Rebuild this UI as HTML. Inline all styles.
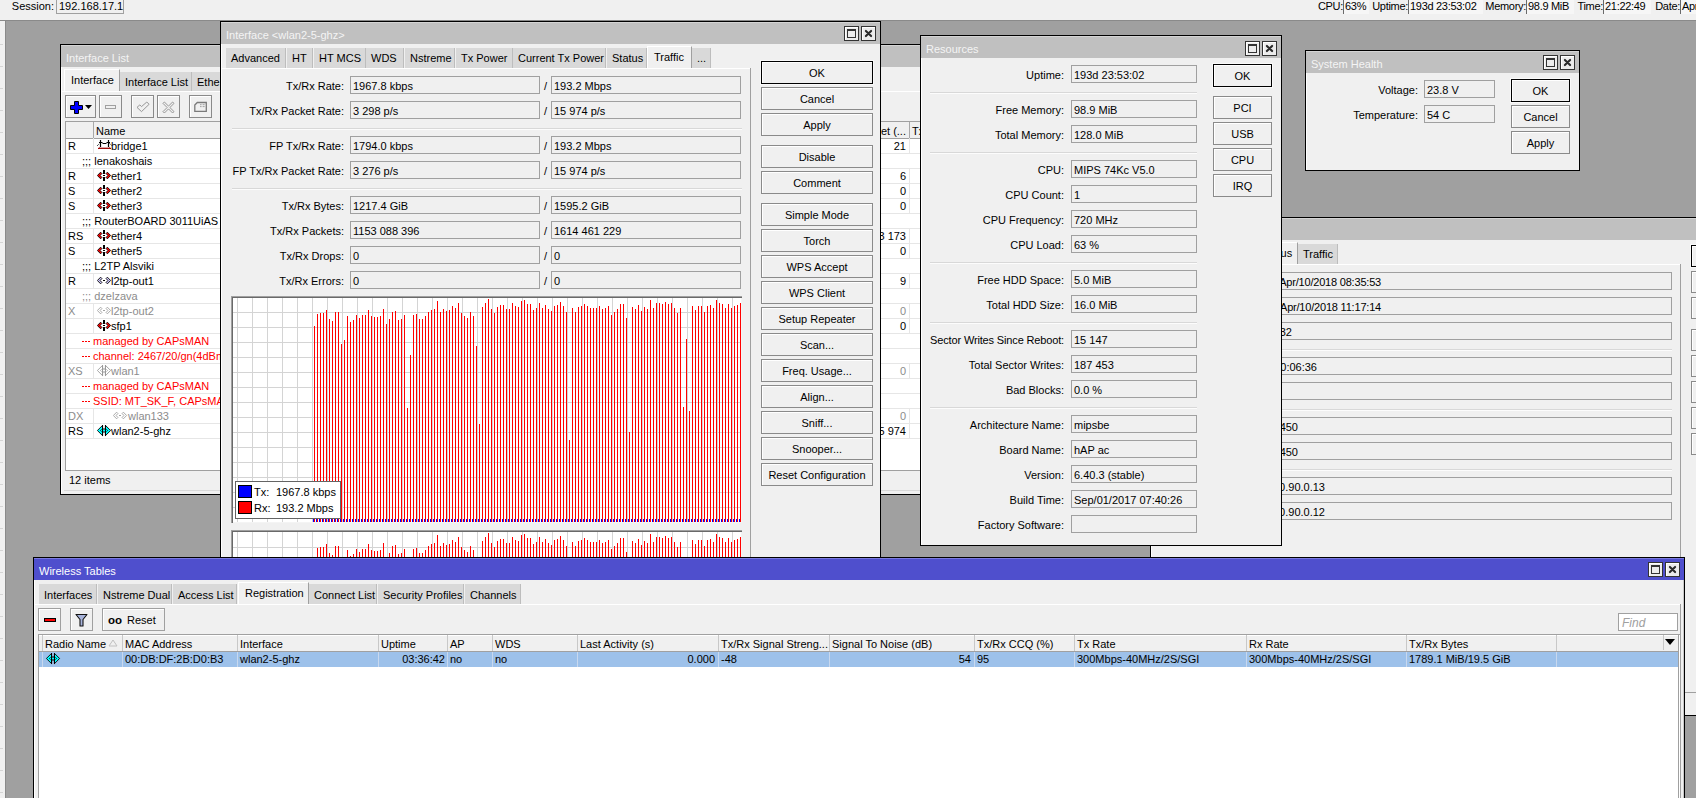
<!DOCTYPE html><html><head><meta charset="utf-8"><style>
html,body{margin:0;padding:0;}
body{width:1696px;height:798px;overflow:hidden;position:relative;background:#a0a0a0;font-family:"Liberation Sans",sans-serif;font-size:11px;color:#000;}
div,svg{position:absolute;}
.t{white-space:nowrap;line-height:13px;font-size:11px;}
</style></head><body>
<div style="left:0px;top:0px;width:1696px;height:20px;background:#f0f0f0;"></div>
<div style="left:0px;top:20px;width:1696px;height:1px;background:#8a8a8a;"></div>
<div style="left:0px;top:21px;width:5px;height:777px;background:#f0f0f0;"></div>
<div style="left:5px;top:21px;width:1px;height:777px;background:#8a8a8a;"></div>
<div style="left:0px;top:44px;width:3px;height:1px;background:#d4d4d4;"></div>
<div style="left:0px;top:66px;width:3px;height:1px;background:#d4d4d4;"></div>
<div style="left:0px;top:88px;width:3px;height:1px;background:#d4d4d4;"></div>
<div style="left:0px;top:110px;width:3px;height:1px;background:#d4d4d4;"></div>
<div style="left:0px;top:132px;width:3px;height:1px;background:#d4d4d4;"></div>
<div style="left:0px;top:154px;width:3px;height:1px;background:#d4d4d4;"></div>
<div style="left:0px;top:176px;width:3px;height:1px;background:#d4d4d4;"></div>
<div style="left:0px;top:198px;width:3px;height:1px;background:#d4d4d4;"></div>
<div style="left:0px;top:220px;width:3px;height:1px;background:#d4d4d4;"></div>
<div style="left:0px;top:242px;width:3px;height:1px;background:#d4d4d4;"></div>
<div style="left:0px;top:264px;width:3px;height:1px;background:#d4d4d4;"></div>
<div style="left:0px;top:286px;width:3px;height:1px;background:#d4d4d4;"></div>
<div style="left:0px;top:308px;width:3px;height:1px;background:#d4d4d4;"></div>
<div style="left:0px;top:330px;width:3px;height:1px;background:#d4d4d4;"></div>
<div style="left:0px;top:352px;width:3px;height:1px;background:#d4d4d4;"></div>
<div style="left:0px;top:374px;width:3px;height:1px;background:#d4d4d4;"></div>
<div style="left:0px;top:396px;width:3px;height:1px;background:#d4d4d4;"></div>
<div style="left:0px;top:418px;width:3px;height:1px;background:#d4d4d4;"></div>
<div style="left:0px;top:440px;width:3px;height:1px;background:#d4d4d4;"></div>
<div style="left:0px;top:462px;width:3px;height:1px;background:#d4d4d4;"></div>
<div style="left:0px;top:484px;width:3px;height:1px;background:#d4d4d4;"></div>
<div style="left:0px;top:506px;width:3px;height:1px;background:#d4d4d4;"></div>
<div style="left:0px;top:528px;width:3px;height:1px;background:#d4d4d4;"></div>
<div style="left:0px;top:550px;width:3px;height:1px;background:#d4d4d4;"></div>
<div style="left:0px;top:572px;width:3px;height:1px;background:#d4d4d4;"></div>
<div style="left:0px;top:594px;width:3px;height:1px;background:#d4d4d4;"></div>
<div style="left:0px;top:616px;width:3px;height:1px;background:#d4d4d4;"></div>
<div style="left:0px;top:638px;width:3px;height:1px;background:#d4d4d4;"></div>
<div style="left:0px;top:660px;width:3px;height:1px;background:#d4d4d4;"></div>
<div style="left:0px;top:682px;width:3px;height:1px;background:#d4d4d4;"></div>
<div style="left:0px;top:704px;width:3px;height:1px;background:#d4d4d4;"></div>
<div style="left:0px;top:726px;width:3px;height:1px;background:#d4d4d4;"></div>
<div style="left:0px;top:748px;width:3px;height:1px;background:#d4d4d4;"></div>
<div style="left:0px;top:770px;width:3px;height:1px;background:#d4d4d4;"></div>
<div style="left:0px;top:792px;width:3px;height:1px;background:#d4d4d4;"></div>
<div class="t" style="right:1642px;top:0px;">Session:</div>
<div style="left:56px;top:-4px;width:68px;height:18px;border:1px solid #a0a0a0;box-sizing:border-box;"></div>
<div class="t" style="left:59px;top:0px;">192.168.17.1</div>
<div class="t" style="right:353px;top:0px;letter-spacing:-0.3px;">CPU:</div>
<div style="left:1343px;top:-2px;width:25px;height:16px;background:#f6f6f6;border-left:1px solid #6a6a6a;"></div>
<div class="t" style="left:1345px;top:0px;letter-spacing:-0.3px;">63%</div>
<div class="t" style="right:288px;top:0px;letter-spacing:-0.3px;">Uptime:</div>
<div style="left:1408px;top:-2px;width:74px;height:16px;background:#f6f6f6;border-left:1px solid #6a6a6a;"></div>
<div class="t" style="left:1410px;top:0px;letter-spacing:-0.3px;">193d 23:53:02</div>
<div class="t" style="right:170px;top:0px;letter-spacing:-0.3px;">Memory:</div>
<div style="left:1526px;top:-2px;width:47px;height:16px;background:#f6f6f6;border-left:1px solid #6a6a6a;"></div>
<div class="t" style="left:1528px;top:0px;letter-spacing:-0.3px;">98.9 MiB</div>
<div class="t" style="right:93px;top:0px;letter-spacing:-0.3px;">Time:</div>
<div style="left:1603px;top:-2px;width:47px;height:16px;background:#f6f6f6;border-left:1px solid #6a6a6a;"></div>
<div class="t" style="left:1605px;top:0px;letter-spacing:-0.3px;">21:22:49</div>
<div class="t" style="right:16px;top:0px;letter-spacing:-0.3px;">Date:</div>
<div style="left:1680px;top:-2px;width:40px;height:16px;background:#f6f6f6;border-left:1px solid #6a6a6a;"></div>
<div class="t" style="left:1682px;top:0px;letter-spacing:-0.3px;">Apr/10/2018</div>
<div style="left:1150px;top:217px;width:560px;height:499px;border:1px solid #000;box-sizing:border-box;background:#f0f0f0;"></div>
<div style="left:1151px;top:218px;width:1px;height:497px;background:#fff;"></div>
<div style="left:1151px;top:218px;width:558px;height:22px;background:#c0c0c0;border-top:1px solid #d4d4d4;box-sizing:border-box;"></div>
<div style="left:1254px;top:242px;width:44px;height:23px;background:#f0f0f0;border-top:1px solid #fff;border-left:1px solid #fff;border-right:1px solid #a0a0a0;box-sizing:border-box;"></div>
<div class="t" style="left:1261px;top:247px;">Status</div>
<div style="left:1298px;top:244px;width:40px;height:20px;background:#d9d9d9;border-right:1px solid #bdbdbd;box-sizing:border-box;"></div>
<div class="t" style="left:1303px;top:248px;">Traffic</div>
<div style="left:1150px;top:264px;width:530px;height:1px;background:#fff;"></div>
<div style="left:1680px;top:264px;width:1px;height:430px;background:#a0a0a0;"></div>
<div style="left:1180px;top:272px;width:492px;height:18px;border:1px solid #a0a0a0;box-sizing:border-box;background:#f0f0f0;"></div>
<div class="t" style="right:315px;top:276px;letter-spacing:-0.2px;">Apr/10/2018 08:35:53</div>
<div style="left:1180px;top:297px;width:492px;height:18px;border:1px solid #a0a0a0;box-sizing:border-box;background:#f0f0f0;"></div>
<div class="t" style="right:315px;top:301px;letter-spacing:-0.2px;">Apr/10/2018 11:17:14</div>
<div style="left:1180px;top:322px;width:492px;height:18px;border:1px solid #a0a0a0;box-sizing:border-box;background:#f0f0f0;"></div>
<div class="t" style="right:404px;top:326px;">1032</div>
<div style="left:1180px;top:357px;width:492px;height:18px;border:1px solid #a0a0a0;box-sizing:border-box;background:#f0f0f0;"></div>
<div class="t" style="right:379px;top:361px;">00:06:36</div>
<div style="left:1180px;top:382px;width:492px;height:18px;border:1px solid #a0a0a0;box-sizing:border-box;background:#f0f0f0;"></div>
<div style="left:1180px;top:417px;width:492px;height:18px;border:1px solid #a0a0a0;box-sizing:border-box;background:#f0f0f0;"></div>
<div class="t" style="right:398px;top:421px;">5450</div>
<div style="left:1180px;top:442px;width:492px;height:18px;border:1px solid #a0a0a0;box-sizing:border-box;background:#f0f0f0;"></div>
<div class="t" style="right:398px;top:446px;">5450</div>
<div style="left:1180px;top:477px;width:492px;height:18px;border:1px solid #a0a0a0;box-sizing:border-box;background:#f0f0f0;"></div>
<div class="t" style="right:371px;top:481px;">10.90.0.13</div>
<div style="left:1180px;top:502px;width:492px;height:18px;border:1px solid #a0a0a0;box-sizing:border-box;background:#f0f0f0;"></div>
<div class="t" style="right:371px;top:506px;">10.90.0.12</div>
<div style="left:1190px;top:349px;width:482px;height:1px;background:#d8d8d8;"></div>
<div style="left:1190px;top:350px;width:482px;height:1px;background:#fcfcfc;"></div>
<div style="left:1190px;top:409px;width:482px;height:1px;background:#d8d8d8;"></div>
<div style="left:1190px;top:410px;width:482px;height:1px;background:#fcfcfc;"></div>
<div style="left:1190px;top:469px;width:482px;height:1px;background:#d8d8d8;"></div>
<div style="left:1190px;top:470px;width:482px;height:1px;background:#fcfcfc;"></div>
<div style="left:1691px;top:245px;width:60px;height:22px;border:1px solid #000;box-shadow:inset 1px 1px 0 #fff, 0 0 0 1px #fafafa;box-sizing:border-box;background:#f0f0f0;"></div>
<div style="left:1691px;top:271px;width:60px;height:22px;border:1px solid #8a8a8a;box-shadow:inset 1px 1px 0 #fff;box-sizing:border-box;background:#f0f0f0;"></div>
<div style="left:1691px;top:297px;width:60px;height:22px;border:1px solid #8a8a8a;box-shadow:inset 1px 1px 0 #fff;box-sizing:border-box;background:#f0f0f0;"></div>
<div style="left:1691px;top:329px;width:60px;height:22px;border:1px solid #8a8a8a;box-shadow:inset 1px 1px 0 #fff;box-sizing:border-box;background:#f0f0f0;"></div>
<div style="left:1691px;top:355px;width:60px;height:22px;border:1px solid #8a8a8a;box-shadow:inset 1px 1px 0 #fff;box-sizing:border-box;background:#f0f0f0;"></div>
<div style="left:1691px;top:381px;width:60px;height:22px;border:1px solid #8a8a8a;box-shadow:inset 1px 1px 0 #fff;box-sizing:border-box;background:#f0f0f0;"></div>
<div style="left:1691px;top:407px;width:60px;height:22px;border:1px solid #8a8a8a;box-shadow:inset 1px 1px 0 #fff;box-sizing:border-box;background:#f0f0f0;"></div>
<div style="left:1691px;top:433px;width:60px;height:22px;border:1px solid #8a8a8a;box-shadow:inset 1px 1px 0 #fff;box-sizing:border-box;background:#f0f0f0;"></div>
<div style="left:1151px;top:692px;width:560px;height:1px;background:#a0a0a0;"></div>
<div style="left:60px;top:44px;width:960px;height:451px;border:1px solid #000;box-sizing:border-box;background:#f0f0f0;"></div>
<div style="left:61px;top:45px;width:1px;height:449px;background:#fff;"></div>
<div style="left:61px;top:45px;width:958px;height:22px;background:#c0c0c0;border-top:1px solid #d4d4d4;box-sizing:border-box;"></div>
<div class="t" style="left:66px;top:52px;color:#f4f4f4;">Interface List</div>
<div style="left:120px;top:72px;width:72px;height:19px;background:#d9d9d9;border-right:1px solid #bdbdbd;box-sizing:border-box;"></div>
<div class="t" style="left:125px;top:76px;">Interface List</div>
<div style="left:192px;top:72px;width:60px;height:19px;background:#d9d9d9;border-right:1px solid #bdbdbd;box-sizing:border-box;"></div>
<div class="t" style="left:197px;top:76px;">Ethernet</div>
<div style="left:64px;top:69px;width:56px;height:23px;background:#f0f0f0;border-top:1px solid #fff;border-left:1px solid #fff;border-right:1px solid #a0a0a0;box-sizing:border-box;"></div>
<div class="t" style="left:71px;top:74px;">Interface</div>
<div style="left:61px;top:91px;width:958px;height:1px;background:#fff;"></div>
<div style="left:65px;top:95px;width:31px;height:23px;border:1px solid #8a8a8a;box-shadow:inset 1px 1px 0 #fff;box-sizing:border-box;"></div>
<div style="left:99px;top:95px;width:23px;height:23px;border:1px solid #8a8a8a;box-shadow:inset 1px 1px 0 #fff;box-sizing:border-box;"></div>
<div style="left:131px;top:95px;width:23px;height:23px;border:1px solid #8a8a8a;box-shadow:inset 1px 1px 0 #fff;box-sizing:border-box;"></div>
<div style="left:157px;top:95px;width:23px;height:23px;border:1px solid #8a8a8a;box-shadow:inset 1px 1px 0 #fff;box-sizing:border-box;"></div>
<div style="left:189px;top:95px;width:23px;height:23px;border:1px solid #8a8a8a;box-shadow:inset 1px 1px 0 #fff;box-sizing:border-box;"></div>
<svg style="left:65px;top:95px" width="31" height="23"><path d="M9.5 6.5H13.5V10.5H17.5V14.5H13.5V18.5H9.5V14.5H5.5V10.5H9.5Z" fill="#0000ff" stroke="#000" stroke-width="1"/><path d="M20 10H27L23.5 14Z" fill="#000"/></svg>
<svg style="left:99px;top:95px" width="23" height="23"><rect x="6.5" y="10.5" width="10" height="3" fill="none" stroke="#a0a0a0"/></svg>
<svg style="left:131px;top:95px" width="23" height="23"><path d="M6 12.4L8.8 9.9L10.5 11.6L15.8 7L18.1 9.3L10.5 16.6Z" fill="none" stroke="#8c8c8c" stroke-width="0.9"/></svg>
<svg style="left:157px;top:95px" width="23" height="23"><path d="M6 8.4L7.4 7L11.5 11.1L15.6 7L17 8.4L12.9 12.5L17 16.6L15.6 18L11.5 13.9L7.4 18L6 16.6L10.1 12.5Z" fill="none" stroke="#8c8c8c" stroke-width="0.9"/></svg>
<svg style="left:189px;top:95px" width="23" height="23"><path d="M5.8 10L8.3 7.5H17.3V16.3H5.8Z" fill="none" stroke="#7a7a7a" stroke-width="1.3"/><path d="M11 9.7H12.6M13.6 9.7H15.6M11 11.6H12.6M13.6 11.6H15.6" stroke="#999" stroke-width="0.9"/></svg>
<div style="left:65px;top:121px;width:950px;height:349px;background:#fff;border-left:1px solid #a0a0a0;border-top:1px solid #a0a0a0;box-sizing:border-box;"></div>
<div style="left:66px;top:122px;width:950px;height:17px;background:#f0f0f0;border-bottom:1px solid #a0a0a0;box-sizing:border-box;"></div>
<div style="left:93px;top:122px;width:1px;height:16px;background:#a8a8a8;"></div>
<div class="t" style="left:96px;top:125px;">Name</div>
<div style="left:909px;top:122px;width:1px;height:16px;background:#a8a8a8;"></div>
<div class="t" style="right:790px;top:125px;">Packet (...</div>
<div class="t" style="left:912px;top:125px;">Tx</div>
<div style="left:66px;top:153px;width:950px;height:1px;background:#e6e6e6;"></div>
<div style="left:93px;top:138px;width:1px;height:15px;background:#e6e6e6;"></div>
<div class="t" style="left:68px;top:140px;">R</div>
<svg style="left:97px;top:139px" width="15" height="13"><path d="M3.5 1V8M11.5 1V8" stroke="#000" stroke-width="1.2"/><path d="M2 3.5H5.5M9.5 3.5H13M5.5 4.5H9.5" stroke="#000" stroke-width="1.1"/><path d="M0.3 6.7L2.5 4.5M12.5 4.5L15 6.7" stroke="#000" stroke-width="1" stroke-dasharray="1 0.6"/><path d="M1.5 9.3H13.5" stroke="#9b0000" stroke-width="1.3"/><path d="M1 10L2.5 8.6M14 10L12.5 8.6" stroke="#9b0000" stroke-width="1"/></svg>
<div class="t" style="left:111px;top:140px;">bridge1</div>
<div class="t" style="right:790px;top:140px;">21</div>
<div style="left:909px;top:138px;width:1px;height:15px;background:#e6e6e6;"></div>
<div style="left:66px;top:168px;width:950px;height:1px;background:#e6e6e6;"></div>
<div class="t" style="left:82px;top:155px;color:#000;">;;; lenakoshais</div>
<div style="left:66px;top:183px;width:950px;height:1px;background:#e6e6e6;"></div>
<div style="left:93px;top:168px;width:1px;height:15px;background:#e6e6e6;"></div>
<div class="t" style="left:68px;top:170px;">R</div>
<svg style="left:97px;top:169px" width="15" height="13"><path d="M0.4 6.5L3.6 3.2L4.9 4.5L3.1 6.5L4.9 8.5L3.6 9.8Z" fill="#f00" stroke="#000" stroke-width="0.9"/><path d="M13.6 6.5L10.4 3.2L9.1 4.5L10.9 6.5L9.1 8.5L10.4 9.8Z" fill="#f00" stroke="#000" stroke-width="0.9"/><rect x="6" y="1" width="2" height="4" fill="#000"/><rect x="6" y="6" width="2" height="1" fill="#000"/><rect x="6" y="8" width="2" height="4" fill="#000"/></svg>
<div class="t" style="left:111px;top:170px;">ether1</div>
<div class="t" style="right:790px;top:170px;">6</div>
<div style="left:909px;top:168px;width:1px;height:15px;background:#e6e6e6;"></div>
<div style="left:66px;top:198px;width:950px;height:1px;background:#e6e6e6;"></div>
<div style="left:93px;top:183px;width:1px;height:15px;background:#e6e6e6;"></div>
<div class="t" style="left:68px;top:185px;">S</div>
<svg style="left:97px;top:184px" width="15" height="13"><path d="M0.4 6.5L3.6 3.2L4.9 4.5L3.1 6.5L4.9 8.5L3.6 9.8Z" fill="#f00" stroke="#000" stroke-width="0.9"/><path d="M13.6 6.5L10.4 3.2L9.1 4.5L10.9 6.5L9.1 8.5L10.4 9.8Z" fill="#f00" stroke="#000" stroke-width="0.9"/><rect x="6" y="1" width="2" height="4" fill="#000"/><rect x="6" y="6" width="2" height="1" fill="#000"/><rect x="6" y="8" width="2" height="4" fill="#000"/></svg>
<div class="t" style="left:111px;top:185px;">ether2</div>
<div class="t" style="right:790px;top:185px;">0</div>
<div style="left:909px;top:183px;width:1px;height:15px;background:#e6e6e6;"></div>
<div style="left:66px;top:213px;width:950px;height:1px;background:#e6e6e6;"></div>
<div style="left:93px;top:198px;width:1px;height:15px;background:#e6e6e6;"></div>
<div class="t" style="left:68px;top:200px;">S</div>
<svg style="left:97px;top:199px" width="15" height="13"><path d="M0.4 6.5L3.6 3.2L4.9 4.5L3.1 6.5L4.9 8.5L3.6 9.8Z" fill="#f00" stroke="#000" stroke-width="0.9"/><path d="M13.6 6.5L10.4 3.2L9.1 4.5L10.9 6.5L9.1 8.5L10.4 9.8Z" fill="#f00" stroke="#000" stroke-width="0.9"/><rect x="6" y="1" width="2" height="4" fill="#000"/><rect x="6" y="6" width="2" height="1" fill="#000"/><rect x="6" y="8" width="2" height="4" fill="#000"/></svg>
<div class="t" style="left:111px;top:200px;">ether3</div>
<div class="t" style="right:790px;top:200px;">0</div>
<div style="left:909px;top:198px;width:1px;height:15px;background:#e6e6e6;"></div>
<div style="left:66px;top:228px;width:950px;height:1px;background:#e6e6e6;"></div>
<div class="t" style="left:82px;top:215px;color:#000;">;;; RouterBOARD 3011UiAS</div>
<div style="left:66px;top:243px;width:950px;height:1px;background:#e6e6e6;"></div>
<div style="left:93px;top:228px;width:1px;height:15px;background:#e6e6e6;"></div>
<div class="t" style="left:68px;top:230px;">RS</div>
<svg style="left:97px;top:229px" width="15" height="13"><path d="M0.4 6.5L3.6 3.2L4.9 4.5L3.1 6.5L4.9 8.5L3.6 9.8Z" fill="#f00" stroke="#000" stroke-width="0.9"/><path d="M13.6 6.5L10.4 3.2L9.1 4.5L10.9 6.5L9.1 8.5L10.4 9.8Z" fill="#f00" stroke="#000" stroke-width="0.9"/><rect x="6" y="1" width="2" height="4" fill="#000"/><rect x="6" y="6" width="2" height="1" fill="#000"/><rect x="6" y="8" width="2" height="4" fill="#000"/></svg>
<div class="t" style="left:111px;top:230px;">ether4</div>
<div class="t" style="right:790px;top:230px;">83 173</div>
<div style="left:909px;top:228px;width:1px;height:15px;background:#e6e6e6;"></div>
<div style="left:66px;top:258px;width:950px;height:1px;background:#e6e6e6;"></div>
<div style="left:93px;top:243px;width:1px;height:15px;background:#e6e6e6;"></div>
<div class="t" style="left:68px;top:245px;">S</div>
<svg style="left:97px;top:244px" width="15" height="13"><path d="M0.4 6.5L3.6 3.2L4.9 4.5L3.1 6.5L4.9 8.5L3.6 9.8Z" fill="#f00" stroke="#000" stroke-width="0.9"/><path d="M13.6 6.5L10.4 3.2L9.1 4.5L10.9 6.5L9.1 8.5L10.4 9.8Z" fill="#f00" stroke="#000" stroke-width="0.9"/><rect x="6" y="1" width="2" height="4" fill="#000"/><rect x="6" y="6" width="2" height="1" fill="#000"/><rect x="6" y="8" width="2" height="4" fill="#000"/></svg>
<div class="t" style="left:111px;top:245px;">ether5</div>
<div class="t" style="right:790px;top:245px;">0</div>
<div style="left:909px;top:243px;width:1px;height:15px;background:#e6e6e6;"></div>
<div style="left:66px;top:273px;width:950px;height:1px;background:#e6e6e6;"></div>
<div class="t" style="left:82px;top:260px;color:#000;">;;; L2TP Alsviki</div>
<div style="left:66px;top:288px;width:950px;height:1px;background:#e6e6e6;"></div>
<div style="left:93px;top:273px;width:1px;height:15px;background:#e6e6e6;"></div>
<div class="t" style="left:68px;top:275px;">R</div>
<svg style="left:97px;top:274px" width="15" height="13"><path d="M0.4 6.5L3.6 3.2L4.9 4.5L3.1 6.5L4.9 8.5L3.6 9.8Z" fill="#d0c8ff" stroke="#000" stroke-width="0.9"/><path d="M13.6 6.5L10.4 3.2L9.1 4.5L10.9 6.5L9.1 8.5L10.4 9.8Z" fill="#d0c8ff" stroke="#000" stroke-width="0.9"/><rect x="6" y="6" width="2" height="1" fill="#000"/></svg>
<div class="t" style="left:111px;top:275px;">l2tp-out1</div>
<div class="t" style="right:790px;top:275px;">9</div>
<div style="left:909px;top:273px;width:1px;height:15px;background:#e6e6e6;"></div>
<div style="left:66px;top:303px;width:950px;height:1px;background:#e6e6e6;"></div>
<div class="t" style="left:82px;top:290px;color:#8c8c8c;">;;; dzelzava</div>
<div style="left:66px;top:318px;width:950px;height:1px;background:#e6e6e6;"></div>
<div style="left:93px;top:303px;width:1px;height:15px;background:#e6e6e6;"></div>
<div class="t" style="left:68px;top:305px;color:#8c8c8c;">X</div>
<svg style="left:97px;top:304px" width="15" height="13"><path d="M0.4 6.5L3.6 3.2L4.9 4.5L3.1 6.5L4.9 8.5L3.6 9.8Z" fill="#fff" stroke="#a0a0a0" stroke-width="0.9"/><path d="M13.6 6.5L10.4 3.2L9.1 4.5L10.9 6.5L9.1 8.5L10.4 9.8Z" fill="#fff" stroke="#a0a0a0" stroke-width="0.9"/><rect x="6" y="6" width="2" height="1" fill="#a0a0a0"/></svg>
<div class="t" style="left:111px;top:305px;color:#8c8c8c;">l2tp-out2</div>
<div class="t" style="right:790px;top:305px;color:#8c8c8c;">0</div>
<div style="left:909px;top:303px;width:1px;height:15px;background:#e6e6e6;"></div>
<div style="left:66px;top:333px;width:950px;height:1px;background:#e6e6e6;"></div>
<div style="left:93px;top:318px;width:1px;height:15px;background:#e6e6e6;"></div>
<div class="t" style="left:68px;top:320px;"></div>
<svg style="left:97px;top:319px" width="15" height="13"><path d="M0.4 6.5L3.6 3.2L4.9 4.5L3.1 6.5L4.9 8.5L3.6 9.8Z" fill="#f00" stroke="#000" stroke-width="0.9"/><path d="M13.6 6.5L10.4 3.2L9.1 4.5L10.9 6.5L9.1 8.5L10.4 9.8Z" fill="#f00" stroke="#000" stroke-width="0.9"/><rect x="6" y="1" width="2" height="4" fill="#000"/><rect x="6" y="6" width="2" height="1" fill="#000"/><rect x="6" y="8" width="2" height="4" fill="#000"/></svg>
<div class="t" style="left:111px;top:320px;">sfp1</div>
<div class="t" style="right:790px;top:320px;">0</div>
<div style="left:909px;top:318px;width:1px;height:15px;background:#e6e6e6;"></div>
<div style="left:66px;top:348px;width:950px;height:1px;background:#e6e6e6;"></div>
<div style="left:82px;top:341px;width:2px;height:1px;background:#ff0000;"></div>
<div style="left:85px;top:341px;width:2px;height:1px;background:#ff0000;"></div>
<div style="left:88px;top:341px;width:2px;height:1px;background:#ff0000;"></div>
<div class="t" style="left:93px;top:335px;color:#ff0000;">managed by CAPsMAN</div>
<div style="left:66px;top:363px;width:950px;height:1px;background:#e6e6e6;"></div>
<div style="left:82px;top:356px;width:2px;height:1px;background:#ff0000;"></div>
<div style="left:85px;top:356px;width:2px;height:1px;background:#ff0000;"></div>
<div style="left:88px;top:356px;width:2px;height:1px;background:#ff0000;"></div>
<div class="t" style="left:93px;top:350px;color:#ff0000;">channel: 2467/20/gn(4dBm), SSID: MT_SK_F, CAPsMAN forwarding</div>
<div style="left:66px;top:378px;width:950px;height:1px;background:#e6e6e6;"></div>
<div style="left:93px;top:363px;width:1px;height:15px;background:#e6e6e6;"></div>
<div class="t" style="left:68px;top:365px;color:#8c8c8c;">XS</div>
<svg style="left:97px;top:364px" width="15" height="13"><path d="M0.4 6.5L5.6 1.3V11.7Z" fill="#fff" stroke="#9a9a9a" stroke-width="0.9"/><path d="M13.6 6.5L8.4 1.3V11.7Z" fill="#fff" stroke="#9a9a9a" stroke-width="0.9"/><rect x="5.5" y="5.5" width="3" height="2" fill="#fff"/><path d="M5.5 5H8.5M5.5 8H8.5" stroke="#9a9a9a" stroke-width="1"/><path d="M5.5 1V12M8.5 1V12" stroke="#9a9a9a" stroke-width="1"/><path d="M3.4 6.5L4.6 5.3M3.4 6.5L4.6 7.7M10.6 6.5L9.4 5.3M10.6 6.5L9.4 7.7" stroke="#9a9a9a" stroke-width="0.8"/></svg>
<div class="t" style="left:111px;top:365px;color:#8c8c8c;">wlan1</div>
<div class="t" style="right:790px;top:365px;color:#8c8c8c;">0</div>
<div style="left:909px;top:363px;width:1px;height:15px;background:#e6e6e6;"></div>
<div style="left:66px;top:393px;width:950px;height:1px;background:#e6e6e6;"></div>
<div style="left:82px;top:386px;width:2px;height:1px;background:#ff0000;"></div>
<div style="left:85px;top:386px;width:2px;height:1px;background:#ff0000;"></div>
<div style="left:88px;top:386px;width:2px;height:1px;background:#ff0000;"></div>
<div class="t" style="left:93px;top:380px;color:#ff0000;">managed by CAPsMAN</div>
<div style="left:66px;top:408px;width:950px;height:1px;background:#e6e6e6;"></div>
<div style="left:82px;top:401px;width:2px;height:1px;background:#ff0000;"></div>
<div style="left:85px;top:401px;width:2px;height:1px;background:#ff0000;"></div>
<div style="left:88px;top:401px;width:2px;height:1px;background:#ff0000;"></div>
<div class="t" style="left:93px;top:395px;color:#ff0000;">SSID: MT_SK_F, CAPsMAN forwarding</div>
<div style="left:66px;top:423px;width:950px;height:1px;background:#e6e6e6;"></div>
<div style="left:93px;top:408px;width:1px;height:15px;background:#e6e6e6;"></div>
<div class="t" style="left:68px;top:410px;color:#8c8c8c;">DX</div>
<svg style="left:113px;top:409px" width="15" height="13"><path d="M0.4 6.5L3.6 3.2L4.9 4.5L3.1 6.5L4.9 8.5L3.6 9.8Z" fill="#fff" stroke="#a0a0a0" stroke-width="0.9"/><path d="M13.6 6.5L10.4 3.2L9.1 4.5L10.9 6.5L9.1 8.5L10.4 9.8Z" fill="#fff" stroke="#a0a0a0" stroke-width="0.9"/><rect x="6" y="6" width="2" height="1" fill="#a0a0a0"/></svg>
<div class="t" style="left:128px;top:410px;color:#8c8c8c;">wlan133</div>
<div class="t" style="right:790px;top:410px;color:#8c8c8c;">0</div>
<div style="left:909px;top:408px;width:1px;height:15px;background:#e6e6e6;"></div>
<div style="left:66px;top:438px;width:950px;height:1px;background:#e6e6e6;"></div>
<div style="left:93px;top:423px;width:1px;height:15px;background:#e6e6e6;"></div>
<div class="t" style="left:68px;top:425px;">RS</div>
<svg style="left:97px;top:424px" width="15" height="13"><path d="M0.4 6.5L5.6 1.3V11.7Z" fill="#00ffff" stroke="#000" stroke-width="0.9"/><path d="M13.6 6.5L8.4 1.3V11.7Z" fill="#00ffff" stroke="#000" stroke-width="0.9"/><rect x="5.5" y="5.5" width="3" height="2" fill="#00ffff"/><path d="M5.5 5H8.5M5.5 8H8.5" stroke="#000" stroke-width="1"/><path d="M5.5 1V12M8.5 1V12" stroke="#000" stroke-width="1"/><path d="M3.4 6.5L4.6 5.3M3.4 6.5L4.6 7.7M10.6 6.5L9.4 5.3M10.6 6.5L9.4 7.7" stroke="#000" stroke-width="0.8"/></svg>
<div class="t" style="left:111px;top:425px;">wlan2-5-ghz</div>
<div class="t" style="right:790px;top:425px;">25 974</div>
<div style="left:909px;top:423px;width:1px;height:15px;background:#e6e6e6;"></div>
<div style="left:65px;top:470px;width:955px;height:1px;background:#a0a0a0;"></div>
<div style="left:65px;top:470px;width:1px;height:20px;background:#a0a0a0;"></div>
<div style="left:65px;top:471px;width:955px;height:19px;background:#f0f0f0;"></div>
<div class="t" style="left:69px;top:474px;">12 items</div>
<div style="left:64px;top:490px;width:955px;height:1px;background:#d8d8d8;"></div>
<div style="left:220px;top:21px;width:661px;height:600px;border:1px solid #000;box-sizing:border-box;background:#f0f0f0;"></div>
<div style="left:221px;top:22px;width:1px;height:598px;background:#fff;"></div>
<div style="left:221px;top:22px;width:659px;height:22px;background:#c0c0c0;border-top:1px solid #d4d4d4;box-sizing:border-box;"></div>
<div class="t" style="left:226px;top:29px;color:#f4f4f4;">Interface &lt;wlan2-5-ghz&gt;</div>
<div style="left:844px;top:26px;width:15px;height:15px;box-sizing:border-box;border:1px solid #333;background:#ececec;box-shadow:inset 1px 1px 0 #fff;"></div>
<div style="left:847px;top:29px;width:9px;height:9px;box-sizing:border-box;border:1px solid #333;border-top-width:2px;"></div>
<div style="left:861px;top:26px;width:15px;height:15px;box-sizing:border-box;border:1px solid #333;background:#ececec;box-shadow:inset 1px 1px 0 #fff;"></div>
<svg style="position:absolute;left:861px;top:26px" width="15" height="15"><path d="M4.9 4.9L10.1 10.1M10.1 4.9L4.9 10.1" stroke="#2a2a2a" stroke-width="2.1" stroke-linecap="round"/></svg>
<div style="left:226px;top:48px;width:60px;height:20px;background:#d9d9d9;border-right:1px solid #bdbdbd;box-sizing:border-box;"></div>
<div class="t" style="left:231px;top:52px;">Advanced</div>
<div style="left:287px;top:48px;width:26px;height:20px;background:#d9d9d9;border-right:1px solid #bdbdbd;box-sizing:border-box;"></div>
<div class="t" style="left:292px;top:52px;">HT</div>
<div style="left:314px;top:48px;width:52px;height:20px;background:#d9d9d9;border-right:1px solid #bdbdbd;box-sizing:border-box;"></div>
<div class="t" style="left:319px;top:52px;">HT MCS</div>
<div style="left:366px;top:48px;width:38px;height:20px;background:#d9d9d9;border-right:1px solid #bdbdbd;box-sizing:border-box;"></div>
<div class="t" style="left:371px;top:52px;">WDS</div>
<div style="left:405px;top:48px;width:50px;height:20px;background:#d9d9d9;border-right:1px solid #bdbdbd;box-sizing:border-box;"></div>
<div class="t" style="left:410px;top:52px;">Nstreme</div>
<div style="left:456px;top:48px;width:57px;height:20px;background:#d9d9d9;border-right:1px solid #bdbdbd;box-sizing:border-box;"></div>
<div class="t" style="left:461px;top:52px;">Tx Power</div>
<div style="left:513px;top:48px;width:93px;height:20px;background:#d9d9d9;border-right:1px solid #bdbdbd;box-sizing:border-box;"></div>
<div class="t" style="left:518px;top:52px;">Current Tx Power</div>
<div style="left:607px;top:48px;width:40px;height:20px;background:#d9d9d9;border-right:1px solid #bdbdbd;box-sizing:border-box;"></div>
<div class="t" style="left:612px;top:52px;">Status</div>
<div style="left:647px;top:46px;width:45px;height:23px;background:#f0f0f0;border-top:1px solid #fff;border-left:1px solid #fff;border-right:1px solid #a0a0a0;box-sizing:border-box;"></div>
<div class="t" style="left:654px;top:51px;">Traffic</div>
<div style="left:692px;top:48px;width:19px;height:20px;background:#d9d9d9;border-right:1px solid #bdbdbd;box-sizing:border-box;"></div>
<div class="t" style="left:697px;top:52px;">...</div>
<div style="left:221px;top:68px;width:530px;height:1px;background:#fff;"></div>
<div style="left:750px;top:68px;width:1px;height:560px;background:#a0a0a0;"></div>
<div class="t" style="right:1352px;top:80px;">Tx/Rx Rate:</div>
<div style="left:350px;top:76px;width:190px;height:18px;border:1px solid #a0a0a0;box-sizing:border-box;background:#f0f0f0;"></div>
<div class="t" style="left:353px;top:80px;">1967.8 kbps</div>
<div class="t" style="left:544px;top:80px;">/</div>
<div style="left:551px;top:76px;width:190px;height:18px;border:1px solid #a0a0a0;box-sizing:border-box;background:#f0f0f0;"></div>
<div class="t" style="left:554px;top:80px;">193.2 Mbps</div>
<div class="t" style="right:1352px;top:105px;">Tx/Rx Packet Rate:</div>
<div style="left:350px;top:101px;width:190px;height:18px;border:1px solid #a0a0a0;box-sizing:border-box;background:#f0f0f0;"></div>
<div class="t" style="left:353px;top:105px;">3 298 p/s</div>
<div class="t" style="left:544px;top:105px;">/</div>
<div style="left:551px;top:101px;width:190px;height:18px;border:1px solid #a0a0a0;box-sizing:border-box;background:#f0f0f0;"></div>
<div class="t" style="left:554px;top:105px;">15 974 p/s</div>
<div class="t" style="right:1352px;top:140px;">FP Tx/Rx Rate:</div>
<div style="left:350px;top:136px;width:190px;height:18px;border:1px solid #a0a0a0;box-sizing:border-box;background:#f0f0f0;"></div>
<div class="t" style="left:353px;top:140px;">1794.0 kbps</div>
<div class="t" style="left:544px;top:140px;">/</div>
<div style="left:551px;top:136px;width:190px;height:18px;border:1px solid #a0a0a0;box-sizing:border-box;background:#f0f0f0;"></div>
<div class="t" style="left:554px;top:140px;">193.2 Mbps</div>
<div class="t" style="right:1352px;top:165px;">FP Tx/Rx Packet Rate:</div>
<div style="left:350px;top:161px;width:190px;height:18px;border:1px solid #a0a0a0;box-sizing:border-box;background:#f0f0f0;"></div>
<div class="t" style="left:353px;top:165px;">3 276 p/s</div>
<div class="t" style="left:544px;top:165px;">/</div>
<div style="left:551px;top:161px;width:190px;height:18px;border:1px solid #a0a0a0;box-sizing:border-box;background:#f0f0f0;"></div>
<div class="t" style="left:554px;top:165px;">15 974 p/s</div>
<div class="t" style="right:1352px;top:200px;">Tx/Rx Bytes:</div>
<div style="left:350px;top:196px;width:190px;height:18px;border:1px solid #a0a0a0;box-sizing:border-box;background:#f0f0f0;"></div>
<div class="t" style="left:353px;top:200px;">1217.4 GiB</div>
<div class="t" style="left:544px;top:200px;">/</div>
<div style="left:551px;top:196px;width:190px;height:18px;border:1px solid #a0a0a0;box-sizing:border-box;background:#f0f0f0;"></div>
<div class="t" style="left:554px;top:200px;">1595.2 GiB</div>
<div class="t" style="right:1352px;top:225px;">Tx/Rx Packets:</div>
<div style="left:350px;top:221px;width:190px;height:18px;border:1px solid #a0a0a0;box-sizing:border-box;background:#f0f0f0;"></div>
<div class="t" style="left:353px;top:225px;">1153 088 396</div>
<div class="t" style="left:544px;top:225px;">/</div>
<div style="left:551px;top:221px;width:190px;height:18px;border:1px solid #a0a0a0;box-sizing:border-box;background:#f0f0f0;"></div>
<div class="t" style="left:554px;top:225px;">1614 461 229</div>
<div class="t" style="right:1352px;top:250px;">Tx/Rx Drops:</div>
<div style="left:350px;top:246px;width:190px;height:18px;border:1px solid #a0a0a0;box-sizing:border-box;background:#f0f0f0;"></div>
<div class="t" style="left:353px;top:250px;">0</div>
<div class="t" style="left:544px;top:250px;">/</div>
<div style="left:551px;top:246px;width:190px;height:18px;border:1px solid #a0a0a0;box-sizing:border-box;background:#f0f0f0;"></div>
<div class="t" style="left:554px;top:250px;">0</div>
<div class="t" style="right:1352px;top:275px;">Tx/Rx Errors:</div>
<div style="left:350px;top:271px;width:190px;height:18px;border:1px solid #a0a0a0;box-sizing:border-box;background:#f0f0f0;"></div>
<div class="t" style="left:353px;top:275px;">0</div>
<div class="t" style="left:544px;top:275px;">/</div>
<div style="left:551px;top:271px;width:190px;height:18px;border:1px solid #a0a0a0;box-sizing:border-box;background:#f0f0f0;"></div>
<div class="t" style="left:554px;top:275px;">0</div>
<div style="left:232px;top:128px;width:510px;height:1px;background:#d8d8d8;"></div>
<div style="left:232px;top:129px;width:510px;height:1px;background:#fcfcfc;"></div>
<div style="left:232px;top:188px;width:510px;height:1px;background:#d8d8d8;"></div>
<div style="left:232px;top:189px;width:510px;height:1px;background:#fcfcfc;"></div>
<div style="left:761px;top:61px;width:112px;height:23px;border:1px solid #000;box-shadow:inset 1px 1px 0 #fff, 0 0 0 1px #fafafa;box-sizing:border-box;background:#f0f0f0;"></div>
<div class="t" style="left:761px;width:112px;text-align:center;top:67px;">OK</div>
<div style="left:761px;top:87px;width:112px;height:23px;border:1px solid #8a8a8a;box-shadow:inset 1px 1px 0 #fff;box-sizing:border-box;background:#f0f0f0;"></div>
<div class="t" style="left:761px;width:112px;text-align:center;top:93px;">Cancel</div>
<div style="left:761px;top:113px;width:112px;height:23px;border:1px solid #8a8a8a;box-shadow:inset 1px 1px 0 #fff;box-sizing:border-box;background:#f0f0f0;"></div>
<div class="t" style="left:761px;width:112px;text-align:center;top:119px;">Apply</div>
<div style="left:761px;top:145px;width:112px;height:23px;border:1px solid #8a8a8a;box-shadow:inset 1px 1px 0 #fff;box-sizing:border-box;background:#f0f0f0;"></div>
<div class="t" style="left:761px;width:112px;text-align:center;top:151px;">Disable</div>
<div style="left:761px;top:171px;width:112px;height:23px;border:1px solid #8a8a8a;box-shadow:inset 1px 1px 0 #fff;box-sizing:border-box;background:#f0f0f0;"></div>
<div class="t" style="left:761px;width:112px;text-align:center;top:177px;">Comment</div>
<div style="left:761px;top:203px;width:112px;height:23px;border:1px solid #8a8a8a;box-shadow:inset 1px 1px 0 #fff;box-sizing:border-box;background:#f0f0f0;"></div>
<div class="t" style="left:761px;width:112px;text-align:center;top:209px;">Simple Mode</div>
<div style="left:761px;top:229px;width:112px;height:23px;border:1px solid #8a8a8a;box-shadow:inset 1px 1px 0 #fff;box-sizing:border-box;background:#f0f0f0;"></div>
<div class="t" style="left:761px;width:112px;text-align:center;top:235px;">Torch</div>
<div style="left:761px;top:255px;width:112px;height:23px;border:1px solid #8a8a8a;box-shadow:inset 1px 1px 0 #fff;box-sizing:border-box;background:#f0f0f0;"></div>
<div class="t" style="left:761px;width:112px;text-align:center;top:261px;">WPS Accept</div>
<div style="left:761px;top:281px;width:112px;height:23px;border:1px solid #8a8a8a;box-shadow:inset 1px 1px 0 #fff;box-sizing:border-box;background:#f0f0f0;"></div>
<div class="t" style="left:761px;width:112px;text-align:center;top:287px;">WPS Client</div>
<div style="left:761px;top:307px;width:112px;height:23px;border:1px solid #8a8a8a;box-shadow:inset 1px 1px 0 #fff;box-sizing:border-box;background:#f0f0f0;"></div>
<div class="t" style="left:761px;width:112px;text-align:center;top:313px;">Setup Repeater</div>
<div style="left:761px;top:333px;width:112px;height:23px;border:1px solid #8a8a8a;box-shadow:inset 1px 1px 0 #fff;box-sizing:border-box;background:#f0f0f0;"></div>
<div class="t" style="left:761px;width:112px;text-align:center;top:339px;">Scan...</div>
<div style="left:761px;top:359px;width:112px;height:23px;border:1px solid #8a8a8a;box-shadow:inset 1px 1px 0 #fff;box-sizing:border-box;background:#f0f0f0;"></div>
<div class="t" style="left:761px;width:112px;text-align:center;top:365px;">Freq. Usage...</div>
<div style="left:761px;top:385px;width:112px;height:23px;border:1px solid #8a8a8a;box-shadow:inset 1px 1px 0 #fff;box-sizing:border-box;background:#f0f0f0;"></div>
<div class="t" style="left:761px;width:112px;text-align:center;top:391px;">Align...</div>
<div style="left:761px;top:411px;width:112px;height:23px;border:1px solid #8a8a8a;box-shadow:inset 1px 1px 0 #fff;box-sizing:border-box;background:#f0f0f0;"></div>
<div class="t" style="left:761px;width:112px;text-align:center;top:417px;">Sniff...</div>
<div style="left:761px;top:437px;width:112px;height:23px;border:1px solid #8a8a8a;box-shadow:inset 1px 1px 0 #fff;box-sizing:border-box;background:#f0f0f0;"></div>
<div class="t" style="left:761px;width:112px;text-align:center;top:443px;">Snooper...</div>
<div style="left:761px;top:463px;width:112px;height:23px;border:1px solid #8a8a8a;box-shadow:inset 1px 1px 0 #fff;box-sizing:border-box;background:#f0f0f0;"></div>
<div class="t" style="left:761px;width:112px;text-align:center;top:469px;">Reset Configuration</div>
<svg style="left:231px;top:296px" width="511" height="227" shape-rendering="crispEdges"><rect x="0" y="0" width="511" height="227" fill="#f4f4f4"/><rect x="0" y="0" width="511" height="1" fill="#a0a0a0"/><rect x="0" y="0" width="1" height="227" fill="#a0a0a0"/><rect x="1" y="1" width="510" height="1" fill="#696969"/><rect x="1" y="1" width="1" height="226" fill="#696969"/><rect x="2" y="2" width="508" height="224" fill="#fff"/><rect x="6" y="2" width="1" height="224" fill="#d4d4d4"/><rect x="21" y="2" width="1" height="224" fill="#d4d4d4"/><rect x="36" y="2" width="1" height="224" fill="#d4d4d4"/><rect x="51" y="2" width="1" height="224" fill="#d4d4d4"/><rect x="66" y="2" width="1" height="224" fill="#d4d4d4"/><rect x="81" y="2" width="1" height="224" fill="#d4d4d4"/><rect x="96" y="2" width="1" height="224" fill="#d4d4d4"/><rect x="111" y="2" width="1" height="224" fill="#d4d4d4"/><rect x="126" y="2" width="1" height="224" fill="#d4d4d4"/><rect x="141" y="2" width="1" height="224" fill="#d4d4d4"/><rect x="156" y="2" width="1" height="224" fill="#d4d4d4"/><rect x="171" y="2" width="1" height="224" fill="#d4d4d4"/><rect x="186" y="2" width="1" height="224" fill="#d4d4d4"/><rect x="201" y="2" width="1" height="224" fill="#d4d4d4"/><rect x="216" y="2" width="1" height="224" fill="#d4d4d4"/><rect x="231" y="2" width="1" height="224" fill="#d4d4d4"/><rect x="246" y="2" width="1" height="224" fill="#d4d4d4"/><rect x="261" y="2" width="1" height="224" fill="#d4d4d4"/><rect x="276" y="2" width="1" height="224" fill="#d4d4d4"/><rect x="291" y="2" width="1" height="224" fill="#d4d4d4"/><rect x="306" y="2" width="1" height="224" fill="#d4d4d4"/><rect x="321" y="2" width="1" height="224" fill="#d4d4d4"/><rect x="336" y="2" width="1" height="224" fill="#d4d4d4"/><rect x="351" y="2" width="1" height="224" fill="#d4d4d4"/><rect x="366" y="2" width="1" height="224" fill="#d4d4d4"/><rect x="381" y="2" width="1" height="224" fill="#d4d4d4"/><rect x="396" y="2" width="1" height="224" fill="#d4d4d4"/><rect x="411" y="2" width="1" height="224" fill="#d4d4d4"/><rect x="426" y="2" width="1" height="224" fill="#d4d4d4"/><rect x="441" y="2" width="1" height="224" fill="#d4d4d4"/><rect x="456" y="2" width="1" height="224" fill="#d4d4d4"/><rect x="471" y="2" width="1" height="224" fill="#d4d4d4"/><rect x="486" y="2" width="1" height="224" fill="#d4d4d4"/><rect x="501" y="2" width="1" height="224" fill="#d4d4d4"/><rect x="2" y="16" width="508" height="1" fill="#d4d4d4"/><rect x="2" y="31" width="508" height="1" fill="#d4d4d4"/><rect x="2" y="46" width="508" height="1" fill="#d4d4d4"/><rect x="2" y="61" width="508" height="1" fill="#d4d4d4"/><rect x="2" y="76" width="508" height="1" fill="#d4d4d4"/><rect x="2" y="91" width="508" height="1" fill="#d4d4d4"/><rect x="2" y="106" width="508" height="1" fill="#d4d4d4"/><rect x="2" y="121" width="508" height="1" fill="#d4d4d4"/><rect x="2" y="136" width="508" height="1" fill="#d4d4d4"/><rect x="2" y="151" width="508" height="1" fill="#d4d4d4"/><rect x="2" y="166" width="508" height="1" fill="#d4d4d4"/><rect x="2" y="181" width="508" height="1" fill="#d4d4d4"/><rect x="2" y="196" width="508" height="1" fill="#d4d4d4"/><rect x="2" y="211" width="508" height="1" fill="#d4d4d4"/><path d="M83.5 30V226 M86.5 18V226 M89.5 17V226 M92.5 17V226 M95.5 14V226 M98.5 23V226 M101.5 25V226 M104.5 16V226 M107.5 16V226 M110.5 48V226 M113.5 44V226 M116.5 20V226 M119.5 26V226 M122.5 24V226 M125.5 19V226 M128.5 22V226 M131.5 19V226 M134.5 19V226 M137.5 14V226 M140.5 20V226 M143.5 21V226 M146.5 21V226 M149.5 20V226 M152.5 13V226 M155.5 28V226 M158.5 23V226 M161.5 16V226 M164.5 15V226 M167.5 24V226 M170.5 23V226 M173.5 19V226 M176.5 112V226 M179.5 59V226 M182.5 19V226 M185.5 18V226 M188.5 23V226 M191.5 23V226 M194.5 20V226 M197.5 16V226 M200.5 14V226 M203.5 13V226 M206.5 5V226 M209.5 16V226 M212.5 13V226 M215.5 15V226 M218.5 14V226 M221.5 10V226 M224.5 12V226 M227.5 7V226 M230.5 17V226 M233.5 20V226 M236.5 22V226 M239.5 16V226 M242.5 20V226 M245.5 50V226 M248.5 128V226 M251.5 11V226 M254.5 7V226 M257.5 3V226 M260.5 13V226 M263.5 17V226 M266.5 11V226 M269.5 9V226 M272.5 9V226 M275.5 13V226 M278.5 13V226 M281.5 7V226 M284.5 10V226 M287.5 11V226 M290.5 5V226 M293.5 4V226 M296.5 8V226 M299.5 8V226 M302.5 14V226 M305.5 12V226 M308.5 7V226 M311.5 12V226 M314.5 9V226 M317.5 13V226 M320.5 15V226 M323.5 10V226 M326.5 9V226 M329.5 6V226 M332.5 10V226 M335.5 16V226 M338.5 144V226 M341.5 12V226 M344.5 16V226 M347.5 11V226 M350.5 10V226 M353.5 8V226 M356.5 10V226 M359.5 12V226 M362.5 12V226 M365.5 12V226 M368.5 10V226 M371.5 13V226 M374.5 12V226 M377.5 10V226 M380.5 19V226 M383.5 16V226 M386.5 13V226 M389.5 8V226 M392.5 8V226 M395.5 22V226 M398.5 136V226 M401.5 11V226 M404.5 13V226 M407.5 9V226 M410.5 15V226 M413.5 11V226 M416.5 13V226 M419.5 4V226 M422.5 12V226 M425.5 7V226 M428.5 7V226 M431.5 8V226 M434.5 6V226 M437.5 8V226 M440.5 7V226 M443.5 12V226 M446.5 17V226 M449.5 12V226 M452.5 111V226 M455.5 43V226 M458.5 115V226 M461.5 10V226 M464.5 14V226 M467.5 10V226 M470.5 10V226 M473.5 16V226 M476.5 10V226 M479.5 9V226 M482.5 12V226 M485.5 4V226 M488.5 7V226 M491.5 8V226 M494.5 12V226 M497.5 8V226 M500.5 12V226 M503.5 10V226 M506.5 9V226 M509.5 7V226" stroke="#ff0000" stroke-width="1"/><path d="M82.5 223V226 M85.5 223V226 M88.5 223V226 M91.5 223V226 M94.5 223V226 M97.5 223V226 M100.5 223V226 M103.5 223V226 M106.5 223V226 M109.5 223V226 M112.5 223V226 M115.5 223V226 M118.5 223V226 M121.5 223V226 M124.5 223V226 M127.5 223V226 M130.5 223V226 M133.5 223V226 M136.5 223V226 M139.5 223V226 M142.5 223V226 M145.5 223V226 M148.5 223V226 M151.5 223V226 M154.5 223V226 M157.5 223V226 M160.5 223V226 M163.5 223V226 M166.5 223V226 M169.5 223V226 M172.5 223V226 M175.5 223V226 M178.5 223V226 M181.5 223V226 M184.5 223V226 M187.5 223V226 M190.5 223V226 M193.5 223V226 M196.5 223V226 M199.5 223V226 M202.5 223V226 M205.5 223V226 M208.5 223V226 M211.5 223V226 M214.5 223V226 M217.5 223V226 M220.5 223V226 M223.5 223V226 M226.5 223V226 M229.5 223V226 M232.5 223V226 M235.5 223V226 M238.5 223V226 M241.5 223V226 M244.5 223V226 M247.5 223V226 M250.5 223V226 M253.5 223V226 M256.5 223V226 M259.5 223V226 M262.5 223V226 M265.5 223V226 M268.5 223V226 M271.5 223V226 M274.5 223V226 M277.5 223V226 M280.5 223V226 M283.5 223V226 M286.5 223V226 M289.5 223V226 M292.5 223V226 M295.5 223V226 M298.5 223V226 M301.5 223V226 M304.5 223V226 M307.5 223V226 M310.5 223V226 M313.5 223V226 M316.5 223V226 M319.5 223V226 M322.5 223V226 M325.5 223V226 M328.5 223V226 M331.5 223V226 M334.5 223V226 M337.5 223V226 M340.5 223V226 M343.5 223V226 M346.5 223V226 M349.5 223V226 M352.5 223V226 M355.5 223V226 M358.5 223V226 M361.5 223V226 M364.5 223V226 M367.5 223V226 M370.5 223V226 M373.5 223V226 M376.5 223V226 M379.5 223V226 M382.5 223V226 M385.5 223V226 M388.5 223V226 M391.5 223V226 M394.5 223V226 M397.5 223V226 M400.5 223V226 M403.5 223V226 M406.5 223V226 M409.5 223V226 M412.5 223V226 M415.5 223V226 M418.5 223V226 M421.5 223V226 M424.5 223V226 M427.5 223V226 M430.5 223V226 M433.5 223V226 M436.5 223V226 M439.5 223V226 M442.5 223V226 M445.5 223V226 M448.5 223V226 M451.5 223V226 M454.5 223V226 M457.5 223V226 M460.5 223V226 M463.5 223V226 M466.5 223V226 M469.5 223V226 M472.5 223V226 M475.5 223V226 M478.5 223V226 M481.5 223V226 M484.5 223V226 M487.5 223V226 M490.5 223V226 M493.5 223V226 M496.5 223V226 M499.5 223V226 M502.5 223V226 M505.5 223V226 M508.5 223V226" stroke="#0000ff" stroke-width="1"/></svg>
<svg style="left:231px;top:530px" width="511" height="228" shape-rendering="crispEdges"><rect x="0" y="0" width="511" height="228" fill="#f4f4f4"/><rect x="0" y="0" width="511" height="1" fill="#a0a0a0"/><rect x="0" y="0" width="1" height="228" fill="#a0a0a0"/><rect x="1" y="1" width="510" height="1" fill="#696969"/><rect x="1" y="1" width="1" height="227" fill="#696969"/><rect x="2" y="2" width="508" height="225" fill="#fff"/><rect x="6" y="2" width="1" height="225" fill="#d4d4d4"/><rect x="21" y="2" width="1" height="225" fill="#d4d4d4"/><rect x="36" y="2" width="1" height="225" fill="#d4d4d4"/><rect x="51" y="2" width="1" height="225" fill="#d4d4d4"/><rect x="66" y="2" width="1" height="225" fill="#d4d4d4"/><rect x="81" y="2" width="1" height="225" fill="#d4d4d4"/><rect x="96" y="2" width="1" height="225" fill="#d4d4d4"/><rect x="111" y="2" width="1" height="225" fill="#d4d4d4"/><rect x="126" y="2" width="1" height="225" fill="#d4d4d4"/><rect x="141" y="2" width="1" height="225" fill="#d4d4d4"/><rect x="156" y="2" width="1" height="225" fill="#d4d4d4"/><rect x="171" y="2" width="1" height="225" fill="#d4d4d4"/><rect x="186" y="2" width="1" height="225" fill="#d4d4d4"/><rect x="201" y="2" width="1" height="225" fill="#d4d4d4"/><rect x="216" y="2" width="1" height="225" fill="#d4d4d4"/><rect x="231" y="2" width="1" height="225" fill="#d4d4d4"/><rect x="246" y="2" width="1" height="225" fill="#d4d4d4"/><rect x="261" y="2" width="1" height="225" fill="#d4d4d4"/><rect x="276" y="2" width="1" height="225" fill="#d4d4d4"/><rect x="291" y="2" width="1" height="225" fill="#d4d4d4"/><rect x="306" y="2" width="1" height="225" fill="#d4d4d4"/><rect x="321" y="2" width="1" height="225" fill="#d4d4d4"/><rect x="336" y="2" width="1" height="225" fill="#d4d4d4"/><rect x="351" y="2" width="1" height="225" fill="#d4d4d4"/><rect x="366" y="2" width="1" height="225" fill="#d4d4d4"/><rect x="381" y="2" width="1" height="225" fill="#d4d4d4"/><rect x="396" y="2" width="1" height="225" fill="#d4d4d4"/><rect x="411" y="2" width="1" height="225" fill="#d4d4d4"/><rect x="426" y="2" width="1" height="225" fill="#d4d4d4"/><rect x="441" y="2" width="1" height="225" fill="#d4d4d4"/><rect x="456" y="2" width="1" height="225" fill="#d4d4d4"/><rect x="471" y="2" width="1" height="225" fill="#d4d4d4"/><rect x="486" y="2" width="1" height="225" fill="#d4d4d4"/><rect x="501" y="2" width="1" height="225" fill="#d4d4d4"/><rect x="2" y="17" width="508" height="1" fill="#d4d4d4"/><rect x="2" y="32" width="508" height="1" fill="#d4d4d4"/><rect x="2" y="47" width="508" height="1" fill="#d4d4d4"/><rect x="2" y="62" width="508" height="1" fill="#d4d4d4"/><rect x="2" y="77" width="508" height="1" fill="#d4d4d4"/><rect x="2" y="92" width="508" height="1" fill="#d4d4d4"/><rect x="2" y="107" width="508" height="1" fill="#d4d4d4"/><rect x="2" y="122" width="508" height="1" fill="#d4d4d4"/><rect x="2" y="137" width="508" height="1" fill="#d4d4d4"/><rect x="2" y="152" width="508" height="1" fill="#d4d4d4"/><rect x="2" y="167" width="508" height="1" fill="#d4d4d4"/><rect x="2" y="182" width="508" height="1" fill="#d4d4d4"/><rect x="2" y="197" width="508" height="1" fill="#d4d4d4"/><rect x="2" y="212" width="508" height="1" fill="#d4d4d4"/><path d="M83.5 30V227 M86.5 18V227 M89.5 17V227 M92.5 17V227 M95.5 14V227 M98.5 23V227 M101.5 25V227 M104.5 16V227 M107.5 16V227 M110.5 48V227 M113.5 44V227 M116.5 20V227 M119.5 26V227 M122.5 24V227 M125.5 19V227 M128.5 22V227 M131.5 19V227 M134.5 19V227 M137.5 14V227 M140.5 20V227 M143.5 21V227 M146.5 21V227 M149.5 20V227 M152.5 13V227 M155.5 28V227 M158.5 23V227 M161.5 16V227 M164.5 15V227 M167.5 24V227 M170.5 23V227 M173.5 19V227 M176.5 112V227 M179.5 59V227 M182.5 19V227 M185.5 18V227 M188.5 23V227 M191.5 23V227 M194.5 20V227 M197.5 16V227 M200.5 14V227 M203.5 13V227 M206.5 5V227 M209.5 16V227 M212.5 13V227 M215.5 15V227 M218.5 14V227 M221.5 10V227 M224.5 12V227 M227.5 7V227 M230.5 17V227 M233.5 20V227 M236.5 22V227 M239.5 16V227 M242.5 20V227 M245.5 50V227 M248.5 128V227 M251.5 11V227 M254.5 7V227 M257.5 3V227 M260.5 13V227 M263.5 17V227 M266.5 11V227 M269.5 9V227 M272.5 9V227 M275.5 13V227 M278.5 13V227 M281.5 7V227 M284.5 10V227 M287.5 11V227 M290.5 5V227 M293.5 4V227 M296.5 8V227 M299.5 8V227 M302.5 14V227 M305.5 12V227 M308.5 7V227 M311.5 12V227 M314.5 9V227 M317.5 13V227 M320.5 15V227 M323.5 10V227 M326.5 9V227 M329.5 6V227 M332.5 10V227 M335.5 16V227 M338.5 144V227 M341.5 12V227 M344.5 16V227 M347.5 11V227 M350.5 10V227 M353.5 8V227 M356.5 10V227 M359.5 12V227 M362.5 12V227 M365.5 12V227 M368.5 10V227 M371.5 13V227 M374.5 12V227 M377.5 10V227 M380.5 19V227 M383.5 16V227 M386.5 13V227 M389.5 8V227 M392.5 8V227 M395.5 22V227 M398.5 136V227 M401.5 11V227 M404.5 13V227 M407.5 9V227 M410.5 15V227 M413.5 11V227 M416.5 13V227 M419.5 4V227 M422.5 12V227 M425.5 7V227 M428.5 7V227 M431.5 8V227 M434.5 6V227 M437.5 8V227 M440.5 7V227 M443.5 12V227 M446.5 17V227 M449.5 12V227 M452.5 111V227 M455.5 43V227 M458.5 115V227 M461.5 10V227 M464.5 14V227 M467.5 10V227 M470.5 10V227 M473.5 16V227 M476.5 10V227 M479.5 9V227 M482.5 12V227 M485.5 4V227 M488.5 7V227 M491.5 8V227 M494.5 12V227 M497.5 8V227 M500.5 12V227 M503.5 10V227 M506.5 9V227 M509.5 7V227" stroke="#ff0000" stroke-width="1"/><path d="M82.5 224V227 M85.5 224V227 M88.5 224V227 M91.5 224V227 M94.5 224V227 M97.5 224V227 M100.5 224V227 M103.5 224V227 M106.5 224V227 M109.5 224V227 M112.5 224V227 M115.5 224V227 M118.5 224V227 M121.5 224V227 M124.5 224V227 M127.5 224V227 M130.5 224V227 M133.5 224V227 M136.5 224V227 M139.5 224V227 M142.5 224V227 M145.5 224V227 M148.5 224V227 M151.5 224V227 M154.5 224V227 M157.5 224V227 M160.5 224V227 M163.5 224V227 M166.5 224V227 M169.5 224V227 M172.5 224V227 M175.5 224V227 M178.5 224V227 M181.5 224V227 M184.5 224V227 M187.5 224V227 M190.5 224V227 M193.5 224V227 M196.5 224V227 M199.5 224V227 M202.5 224V227 M205.5 224V227 M208.5 224V227 M211.5 224V227 M214.5 224V227 M217.5 224V227 M220.5 224V227 M223.5 224V227 M226.5 224V227 M229.5 224V227 M232.5 224V227 M235.5 224V227 M238.5 224V227 M241.5 224V227 M244.5 224V227 M247.5 224V227 M250.5 224V227 M253.5 224V227 M256.5 224V227 M259.5 224V227 M262.5 224V227 M265.5 224V227 M268.5 224V227 M271.5 224V227 M274.5 224V227 M277.5 224V227 M280.5 224V227 M283.5 224V227 M286.5 224V227 M289.5 224V227 M292.5 224V227 M295.5 224V227 M298.5 224V227 M301.5 224V227 M304.5 224V227 M307.5 224V227 M310.5 224V227 M313.5 224V227 M316.5 224V227 M319.5 224V227 M322.5 224V227 M325.5 224V227 M328.5 224V227 M331.5 224V227 M334.5 224V227 M337.5 224V227 M340.5 224V227 M343.5 224V227 M346.5 224V227 M349.5 224V227 M352.5 224V227 M355.5 224V227 M358.5 224V227 M361.5 224V227 M364.5 224V227 M367.5 224V227 M370.5 224V227 M373.5 224V227 M376.5 224V227 M379.5 224V227 M382.5 224V227 M385.5 224V227 M388.5 224V227 M391.5 224V227 M394.5 224V227 M397.5 224V227 M400.5 224V227 M403.5 224V227 M406.5 224V227 M409.5 224V227 M412.5 224V227 M415.5 224V227 M418.5 224V227 M421.5 224V227 M424.5 224V227 M427.5 224V227 M430.5 224V227 M433.5 224V227 M436.5 224V227 M439.5 224V227 M442.5 224V227 M445.5 224V227 M448.5 224V227 M451.5 224V227 M454.5 224V227 M457.5 224V227 M460.5 224V227 M463.5 224V227 M466.5 224V227 M469.5 224V227 M472.5 224V227 M475.5 224V227 M478.5 224V227 M481.5 224V227 M484.5 224V227 M487.5 224V227 M490.5 224V227 M493.5 224V227 M496.5 224V227 M499.5 224V227 M502.5 224V227 M505.5 224V227 M508.5 224V227" stroke="#0000ff" stroke-width="1"/></svg>
<div style="left:235px;top:481px;width:106px;height:38px;background:#fff;border:1px solid #646464;box-sizing:border-box;"></div>
<div style="left:238px;top:485px;width:14px;height:13px;background:#0000ff;border:1px solid #000;box-sizing:border-box;"></div>
<div style="left:238px;top:501px;width:14px;height:13px;background:#ff0000;border:1px solid #000;box-sizing:border-box;"></div>
<div class="t" style="left:254px;top:486px;">Tx:</div>
<div class="t" style="left:276px;top:486px;">1967.8 kbps</div>
<div class="t" style="left:254px;top:502px;">Rx:</div>
<div class="t" style="left:276px;top:502px;">193.2 Mbps</div>
<div style="left:920px;top:35px;width:362px;height:511px;border:1px solid #000;box-sizing:border-box;background:#f0f0f0;"></div>
<div style="left:921px;top:36px;width:1px;height:509px;background:#fff;"></div>
<div style="left:921px;top:36px;width:360px;height:22px;background:#c0c0c0;border-top:1px solid #d4d4d4;box-sizing:border-box;"></div>
<div class="t" style="left:926px;top:43px;color:#f4f4f4;">Resources</div>
<div style="left:1245px;top:41px;width:15px;height:15px;box-sizing:border-box;border:1px solid #333;background:#ececec;box-shadow:inset 1px 1px 0 #fff;"></div>
<div style="left:1248px;top:44px;width:9px;height:9px;box-sizing:border-box;border:1px solid #333;border-top-width:2px;"></div>
<div style="left:1262px;top:41px;width:15px;height:15px;box-sizing:border-box;border:1px solid #333;background:#ececec;box-shadow:inset 1px 1px 0 #fff;"></div>
<svg style="position:absolute;left:1262px;top:41px" width="15" height="15"><path d="M4.9 4.9L10.1 10.1M10.1 4.9L4.9 10.1" stroke="#2a2a2a" stroke-width="2.1" stroke-linecap="round"/></svg>
<div class="t" style="right:632px;top:69px;">Uptime:</div>
<div style="left:1071px;top:65px;width:126px;height:18px;border:1px solid #a0a0a0;box-sizing:border-box;background:#f0f0f0;"></div>
<div class="t" style="left:1074px;top:69px;">193d 23:53:02</div>
<div class="t" style="right:632px;top:104px;">Free Memory:</div>
<div style="left:1071px;top:100px;width:126px;height:18px;border:1px solid #a0a0a0;box-sizing:border-box;background:#f0f0f0;"></div>
<div class="t" style="left:1074px;top:104px;">98.9 MiB</div>
<div class="t" style="right:632px;top:129px;">Total Memory:</div>
<div style="left:1071px;top:125px;width:126px;height:18px;border:1px solid #a0a0a0;box-sizing:border-box;background:#f0f0f0;"></div>
<div class="t" style="left:1074px;top:129px;">128.0 MiB</div>
<div class="t" style="right:632px;top:164px;">CPU:</div>
<div style="left:1071px;top:160px;width:126px;height:18px;border:1px solid #a0a0a0;box-sizing:border-box;background:#f0f0f0;"></div>
<div class="t" style="left:1074px;top:164px;">MIPS 74Kc V5.0</div>
<div class="t" style="right:632px;top:189px;">CPU Count:</div>
<div style="left:1071px;top:185px;width:126px;height:18px;border:1px solid #a0a0a0;box-sizing:border-box;background:#f0f0f0;"></div>
<div class="t" style="left:1074px;top:189px;">1</div>
<div class="t" style="right:632px;top:214px;">CPU Frequency:</div>
<div style="left:1071px;top:210px;width:126px;height:18px;border:1px solid #a0a0a0;box-sizing:border-box;background:#f0f0f0;"></div>
<div class="t" style="left:1074px;top:214px;">720 MHz</div>
<div class="t" style="right:632px;top:239px;">CPU Load:</div>
<div style="left:1071px;top:235px;width:126px;height:18px;border:1px solid #a0a0a0;box-sizing:border-box;background:#f0f0f0;"></div>
<div class="t" style="left:1074px;top:239px;">63 %</div>
<div class="t" style="right:632px;top:274px;">Free HDD Space:</div>
<div style="left:1071px;top:270px;width:126px;height:18px;border:1px solid #a0a0a0;box-sizing:border-box;background:#f0f0f0;"></div>
<div class="t" style="left:1074px;top:274px;">5.0 MiB</div>
<div class="t" style="right:632px;top:299px;">Total HDD Size:</div>
<div style="left:1071px;top:295px;width:126px;height:18px;border:1px solid #a0a0a0;box-sizing:border-box;background:#f0f0f0;"></div>
<div class="t" style="left:1074px;top:299px;">16.0 MiB</div>
<div class="t" style="right:632px;top:334px;letter-spacing:-0.15px;">Sector Writes Since Reboot:</div>
<div style="left:1071px;top:330px;width:126px;height:18px;border:1px solid #a0a0a0;box-sizing:border-box;background:#f0f0f0;"></div>
<div class="t" style="left:1074px;top:334px;">15 147</div>
<div class="t" style="right:632px;top:359px;">Total Sector Writes:</div>
<div style="left:1071px;top:355px;width:126px;height:18px;border:1px solid #a0a0a0;box-sizing:border-box;background:#f0f0f0;"></div>
<div class="t" style="left:1074px;top:359px;">187 453</div>
<div class="t" style="right:632px;top:384px;">Bad Blocks:</div>
<div style="left:1071px;top:380px;width:126px;height:18px;border:1px solid #a0a0a0;box-sizing:border-box;background:#f0f0f0;"></div>
<div class="t" style="left:1074px;top:384px;">0.0 %</div>
<div class="t" style="right:632px;top:419px;">Architecture Name:</div>
<div style="left:1071px;top:415px;width:126px;height:18px;border:1px solid #a0a0a0;box-sizing:border-box;background:#f0f0f0;"></div>
<div class="t" style="left:1074px;top:419px;">mipsbe</div>
<div class="t" style="right:632px;top:444px;">Board Name:</div>
<div style="left:1071px;top:440px;width:126px;height:18px;border:1px solid #a0a0a0;box-sizing:border-box;background:#f0f0f0;"></div>
<div class="t" style="left:1074px;top:444px;">hAP ac</div>
<div class="t" style="right:632px;top:469px;">Version:</div>
<div style="left:1071px;top:465px;width:126px;height:18px;border:1px solid #a0a0a0;box-sizing:border-box;background:#f0f0f0;"></div>
<div class="t" style="left:1074px;top:469px;">6.40.3 (stable)</div>
<div class="t" style="right:632px;top:494px;">Build Time:</div>
<div style="left:1071px;top:490px;width:126px;height:18px;border:1px solid #a0a0a0;box-sizing:border-box;background:#f0f0f0;"></div>
<div class="t" style="left:1074px;top:494px;">Sep/01/2017 07:40:26</div>
<div class="t" style="right:632px;top:519px;">Factory Software:</div>
<div style="left:1071px;top:515px;width:126px;height:18px;border:1px solid #a0a0a0;box-sizing:border-box;background:#f0f0f0;"></div>
<div style="left:930px;top:92px;width:267px;height:1px;background:#d8d8d8;"></div>
<div style="left:930px;top:93px;width:267px;height:1px;background:#fcfcfc;"></div>
<div style="left:930px;top:152px;width:267px;height:1px;background:#d8d8d8;"></div>
<div style="left:930px;top:153px;width:267px;height:1px;background:#fcfcfc;"></div>
<div style="left:930px;top:262px;width:267px;height:1px;background:#d8d8d8;"></div>
<div style="left:930px;top:263px;width:267px;height:1px;background:#fcfcfc;"></div>
<div style="left:930px;top:322px;width:267px;height:1px;background:#d8d8d8;"></div>
<div style="left:930px;top:323px;width:267px;height:1px;background:#fcfcfc;"></div>
<div style="left:930px;top:407px;width:267px;height:1px;background:#d8d8d8;"></div>
<div style="left:930px;top:408px;width:267px;height:1px;background:#fcfcfc;"></div>
<div style="left:1213px;top:64px;width:59px;height:23px;border:1px solid #000;box-shadow:inset 1px 1px 0 #fff, 0 0 0 1px #fafafa;box-sizing:border-box;background:#f0f0f0;"></div>
<div class="t" style="left:1213px;width:59px;text-align:center;top:70px;">OK</div>
<div style="left:1213px;top:96px;width:59px;height:23px;border:1px solid #8a8a8a;box-shadow:inset 1px 1px 0 #fff;box-sizing:border-box;background:#f0f0f0;"></div>
<div class="t" style="left:1213px;width:59px;text-align:center;top:102px;">PCI</div>
<div style="left:1213px;top:122px;width:59px;height:23px;border:1px solid #8a8a8a;box-shadow:inset 1px 1px 0 #fff;box-sizing:border-box;background:#f0f0f0;"></div>
<div class="t" style="left:1213px;width:59px;text-align:center;top:128px;">USB</div>
<div style="left:1213px;top:148px;width:59px;height:23px;border:1px solid #8a8a8a;box-shadow:inset 1px 1px 0 #fff;box-sizing:border-box;background:#f0f0f0;"></div>
<div class="t" style="left:1213px;width:59px;text-align:center;top:154px;">CPU</div>
<div style="left:1213px;top:174px;width:59px;height:23px;border:1px solid #8a8a8a;box-shadow:inset 1px 1px 0 #fff;box-sizing:border-box;background:#f0f0f0;"></div>
<div class="t" style="left:1213px;width:59px;text-align:center;top:180px;">IRQ</div>
<div style="left:1305px;top:50px;width:275px;height:121px;border:1px solid #000;box-sizing:border-box;background:#f0f0f0;"></div>
<div style="left:1306px;top:51px;width:1px;height:119px;background:#fff;"></div>
<div style="left:1306px;top:51px;width:273px;height:22px;background:#c0c0c0;border-top:1px solid #d4d4d4;box-sizing:border-box;"></div>
<div class="t" style="left:1311px;top:58px;color:#f4f4f4;">System Health</div>
<div style="left:1543px;top:55px;width:15px;height:15px;box-sizing:border-box;border:1px solid #333;background:#ececec;box-shadow:inset 1px 1px 0 #fff;"></div>
<div style="left:1546px;top:58px;width:9px;height:9px;box-sizing:border-box;border:1px solid #333;border-top-width:2px;"></div>
<div style="left:1560px;top:55px;width:15px;height:15px;box-sizing:border-box;border:1px solid #333;background:#ececec;box-shadow:inset 1px 1px 0 #fff;"></div>
<svg style="position:absolute;left:1560px;top:55px" width="15" height="15"><path d="M4.9 4.9L10.1 10.1M10.1 4.9L4.9 10.1" stroke="#2a2a2a" stroke-width="2.1" stroke-linecap="round"/></svg>
<div class="t" style="right:278px;top:84px;">Voltage:</div>
<div style="left:1424px;top:80px;width:71px;height:18px;border:1px solid #a0a0a0;box-sizing:border-box;background:#f0f0f0;"></div>
<div class="t" style="left:1427px;top:84px;">23.8 V</div>
<div class="t" style="right:278px;top:109px;">Temperature:</div>
<div style="left:1424px;top:105px;width:71px;height:18px;border:1px solid #a0a0a0;box-sizing:border-box;background:#f0f0f0;"></div>
<div class="t" style="left:1427px;top:109px;">54 C</div>
<div style="left:1511px;top:79px;width:59px;height:23px;border:1px solid #000;box-shadow:inset 1px 1px 0 #fff, 0 0 0 1px #fafafa;box-sizing:border-box;background:#f0f0f0;"></div>
<div class="t" style="left:1511px;width:59px;text-align:center;top:85px;">OK</div>
<div style="left:1511px;top:105px;width:59px;height:23px;border:1px solid #8a8a8a;box-shadow:inset 1px 1px 0 #fff;box-sizing:border-box;background:#f0f0f0;"></div>
<div class="t" style="left:1511px;width:59px;text-align:center;top:111px;">Cancel</div>
<div style="left:1511px;top:131px;width:59px;height:23px;border:1px solid #8a8a8a;box-shadow:inset 1px 1px 0 #fff;box-sizing:border-box;background:#f0f0f0;"></div>
<div class="t" style="left:1511px;width:59px;text-align:center;top:137px;">Apply</div>
<div style="left:33px;top:557px;width:1652px;height:260px;border:1px solid #000;box-sizing:border-box;background:#f0f0f0;"></div>
<div style="left:34px;top:558px;width:1px;height:258px;background:#fff;"></div>
<div style="left:34px;top:558px;width:1650px;height:22px;background:#4f4fcd;border-top:1px solid #7a7ae0;box-sizing:border-box;"></div>
<div class="t" style="left:39px;top:565px;color:#fff;">Wireless Tables</div>
<div style="left:1648px;top:562px;width:15px;height:15px;box-sizing:border-box;border:1px solid #333;background:#ececec;box-shadow:inset 1px 1px 0 #fff;"></div>
<div style="left:1651px;top:565px;width:9px;height:9px;box-sizing:border-box;border:1px solid #333;border-top-width:2px;"></div>
<div style="left:1665px;top:562px;width:15px;height:15px;box-sizing:border-box;border:1px solid #333;background:#ececec;box-shadow:inset 1px 1px 0 #fff;"></div>
<svg style="position:absolute;left:1665px;top:562px" width="15" height="15"><path d="M4.9 4.9L10.1 10.1M10.1 4.9L4.9 10.1" stroke="#2a2a2a" stroke-width="2.1" stroke-linecap="round"/></svg>
<div style="left:39px;top:584px;width:58px;height:20px;background:#d9d9d9;border-right:1px solid #bdbdbd;box-sizing:border-box;"></div>
<div class="t" style="left:44px;top:589px;">Interfaces</div>
<div style="left:98px;top:584px;width:74px;height:20px;background:#d9d9d9;border-right:1px solid #bdbdbd;box-sizing:border-box;"></div>
<div class="t" style="left:103px;top:589px;">Nstreme Dual</div>
<div style="left:173px;top:584px;width:64px;height:20px;background:#d9d9d9;border-right:1px solid #bdbdbd;box-sizing:border-box;"></div>
<div class="t" style="left:178px;top:589px;">Access List</div>
<div style="left:309px;top:584px;width:68px;height:20px;background:#d9d9d9;border-right:1px solid #bdbdbd;box-sizing:border-box;"></div>
<div class="t" style="left:314px;top:589px;">Connect List</div>
<div style="left:378px;top:584px;width:86px;height:20px;background:#d9d9d9;border-right:1px solid #bdbdbd;box-sizing:border-box;"></div>
<div class="t" style="left:383px;top:589px;">Security Profiles</div>
<div style="left:465px;top:584px;width:56px;height:20px;background:#d9d9d9;border-right:1px solid #bdbdbd;box-sizing:border-box;"></div>
<div class="t" style="left:470px;top:589px;">Channels</div>
<div style="left:238px;top:582px;width:71px;height:23px;background:#f0f0f0;border-top:1px solid #fff;border-left:1px solid #fff;border-right:1px solid #a0a0a0;box-sizing:border-box;"></div>
<div class="t" style="left:245px;top:587px;">Registration</div>
<div style="left:34px;top:604px;width:1646px;height:1px;background:#fff;"></div>
<div style="left:1680px;top:604px;width:1px;height:200px;background:#a0a0a0;"></div>
<div style="left:1683px;top:580px;width:1px;height:220px;background:#c8c8c8;"></div>
<div style="left:38px;top:608px;width:23px;height:23px;border:1px solid #a0a0a0;box-shadow:inset 1px 1px 0 #fff;box-sizing:border-box;"></div>
<div style="left:44px;top:618px;width:12px;height:4px;background:#f00;border:1px solid #000;box-sizing:border-box;"></div>
<div style="left:70px;top:608px;width:23px;height:23px;border:1px solid #a0a0a0;box-shadow:inset 1px 1px 0 #fff;box-sizing:border-box;"></div>
<svg style="left:70px;top:608px" width="23" height="23"><path d="M6 6.5H17L13 11.5V18H10V11.5Z" fill="#a8b4dc" stroke="#111" stroke-width="1.1" stroke-linejoin="round"/></svg>
<div style="left:102px;top:608px;width:63px;height:23px;border:1px solid #a0a0a0;box-shadow:inset 1px 1px 0 #fff;box-sizing:border-box;"></div>
<div class="t" style="left:108px;top:614px;font-weight:bold;font-size:11.5px;">oo</div>
<div class="t" style="left:127px;top:614px;">Reset</div>
<div style="left:1618px;top:613px;width:60px;height:18px;background:#fff;border:1px solid #a0a0a0;box-sizing:border-box;"></div>
<div class="t" style="left:1622px;top:617px;color:#a0a0a0;font-style:italic;font-size:12px;">Find</div>
<div style="left:38px;top:634px;width:1642px;height:170px;background:#fff;border-left:1px solid #a0a0a0;border-top:1px solid #a0a0a0;box-sizing:border-box;"></div>
<div style="left:39px;top:635px;width:1639px;height:17px;background:#f0f0f0;border-top:1px solid #fff;border-bottom:1px solid #a0a0a0;box-sizing:border-box;"></div>
<div style="left:39px;top:652px;width:1639px;height:15px;background:#9dc1ea;"></div>
<div style="left:42px;top:635px;width:1px;height:16px;background:#c8c8c8;"></div>
<div style="left:42px;top:652px;width:1px;height:15px;background:#c8d8ee;"></div>
<div style="left:122px;top:635px;width:1px;height:16px;background:#c8c8c8;"></div>
<div style="left:122px;top:652px;width:1px;height:15px;background:#c8d8ee;"></div>
<div style="left:237px;top:635px;width:1px;height:16px;background:#c8c8c8;"></div>
<div style="left:237px;top:652px;width:1px;height:15px;background:#c8d8ee;"></div>
<div style="left:378px;top:635px;width:1px;height:16px;background:#c8c8c8;"></div>
<div style="left:378px;top:652px;width:1px;height:15px;background:#c8d8ee;"></div>
<div style="left:447px;top:635px;width:1px;height:16px;background:#c8c8c8;"></div>
<div style="left:447px;top:652px;width:1px;height:15px;background:#c8d8ee;"></div>
<div style="left:492px;top:635px;width:1px;height:16px;background:#c8c8c8;"></div>
<div style="left:492px;top:652px;width:1px;height:15px;background:#c8d8ee;"></div>
<div style="left:577px;top:635px;width:1px;height:16px;background:#c8c8c8;"></div>
<div style="left:577px;top:652px;width:1px;height:15px;background:#c8d8ee;"></div>
<div style="left:718px;top:635px;width:1px;height:16px;background:#c8c8c8;"></div>
<div style="left:718px;top:652px;width:1px;height:15px;background:#c8d8ee;"></div>
<div style="left:829px;top:635px;width:1px;height:16px;background:#c8c8c8;"></div>
<div style="left:829px;top:652px;width:1px;height:15px;background:#c8d8ee;"></div>
<div style="left:974px;top:635px;width:1px;height:16px;background:#c8c8c8;"></div>
<div style="left:974px;top:652px;width:1px;height:15px;background:#c8d8ee;"></div>
<div style="left:1074px;top:635px;width:1px;height:16px;background:#c8c8c8;"></div>
<div style="left:1074px;top:652px;width:1px;height:15px;background:#c8d8ee;"></div>
<div style="left:1246px;top:635px;width:1px;height:16px;background:#c8c8c8;"></div>
<div style="left:1246px;top:652px;width:1px;height:15px;background:#c8d8ee;"></div>
<div style="left:1406px;top:635px;width:1px;height:16px;background:#c8c8c8;"></div>
<div style="left:1406px;top:652px;width:1px;height:15px;background:#c8d8ee;"></div>
<div style="left:1556px;top:635px;width:1px;height:16px;background:#c8c8c8;"></div>
<div style="left:1556px;top:652px;width:1px;height:15px;background:#c8d8ee;"></div>
<div style="left:1678px;top:634px;width:1px;height:170px;background:#a0a0a0;"></div>
<div style="left:1663px;top:635px;width:1px;height:15px;background:#c8c8c8;"></div>
<div class="t" style="left:45px;top:638px;">Radio Name</div>
<div class="t" style="left:125px;top:638px;">MAC Address</div>
<div class="t" style="left:240px;top:638px;">Interface</div>
<div class="t" style="left:381px;top:638px;">Uptime</div>
<div class="t" style="left:450px;top:638px;">AP</div>
<div class="t" style="left:495px;top:638px;">WDS</div>
<div class="t" style="left:580px;top:638px;">Last Activity (s)</div>
<div class="t" style="left:721px;top:638px;">Tx/Rx Signal Streng...</div>
<div class="t" style="left:832px;top:638px;">Signal To Noise (dB)</div>
<div class="t" style="left:977px;top:638px;">Tx/Rx CCQ (%)</div>
<div class="t" style="left:1077px;top:638px;">Tx Rate</div>
<div class="t" style="left:1249px;top:638px;">Rx Rate</div>
<div class="t" style="left:1409px;top:638px;">Tx/Rx Bytes</div>
<svg style="left:46px;top:652px" width="15" height="13"><path d="M0.4 6.5L5.6 1.3V11.7Z" fill="#00ffff" stroke="#000" stroke-width="0.9"/><path d="M13.6 6.5L8.4 1.3V11.7Z" fill="#00ffff" stroke="#000" stroke-width="0.9"/><rect x="5.5" y="5.5" width="3" height="2" fill="#00ffff"/><path d="M5.5 5H8.5M5.5 8H8.5" stroke="#000" stroke-width="1"/><path d="M5.5 1V12M8.5 1V12" stroke="#000" stroke-width="1"/><path d="M3.4 6.5L4.6 5.3M3.4 6.5L4.6 7.7M10.6 6.5L9.4 5.3M10.6 6.5L9.4 7.7" stroke="#000" stroke-width="0.8"/></svg>
<svg style="left:108px;top:639px" width="10" height="8"><path d="M1 7L5 1L9 7Z" fill="none" stroke="#c0c0c0"/></svg>
<svg style="left:1664px;top:638px" width="12" height="8"><path d="M1 1H11L6 7Z" fill="#000"/></svg>
<div class="t" style="left:125px;top:653px;">00:DB:DF:2B:D0:B3</div>
<div class="t" style="left:240px;top:653px;">wlan2-5-ghz</div>
<div class="t" style="right:1251px;top:653px;">03:36:42</div>
<div class="t" style="left:450px;top:653px;">no</div>
<div class="t" style="left:495px;top:653px;">no</div>
<div class="t" style="right:981px;top:653px;">0.000</div>
<div class="t" style="left:721px;top:653px;">-48</div>
<div class="t" style="right:725px;top:653px;">54</div>
<div class="t" style="left:977px;top:653px;">95</div>
<div class="t" style="left:1077px;top:653px;">300Mbps-40MHz/2S/SGI</div>
<div class="t" style="left:1249px;top:653px;">300Mbps-40MHz/2S/SGI</div>
<div class="t" style="left:1409px;top:653px;">1789.1 MiB/19.5 GiB</div>
</body></html>
